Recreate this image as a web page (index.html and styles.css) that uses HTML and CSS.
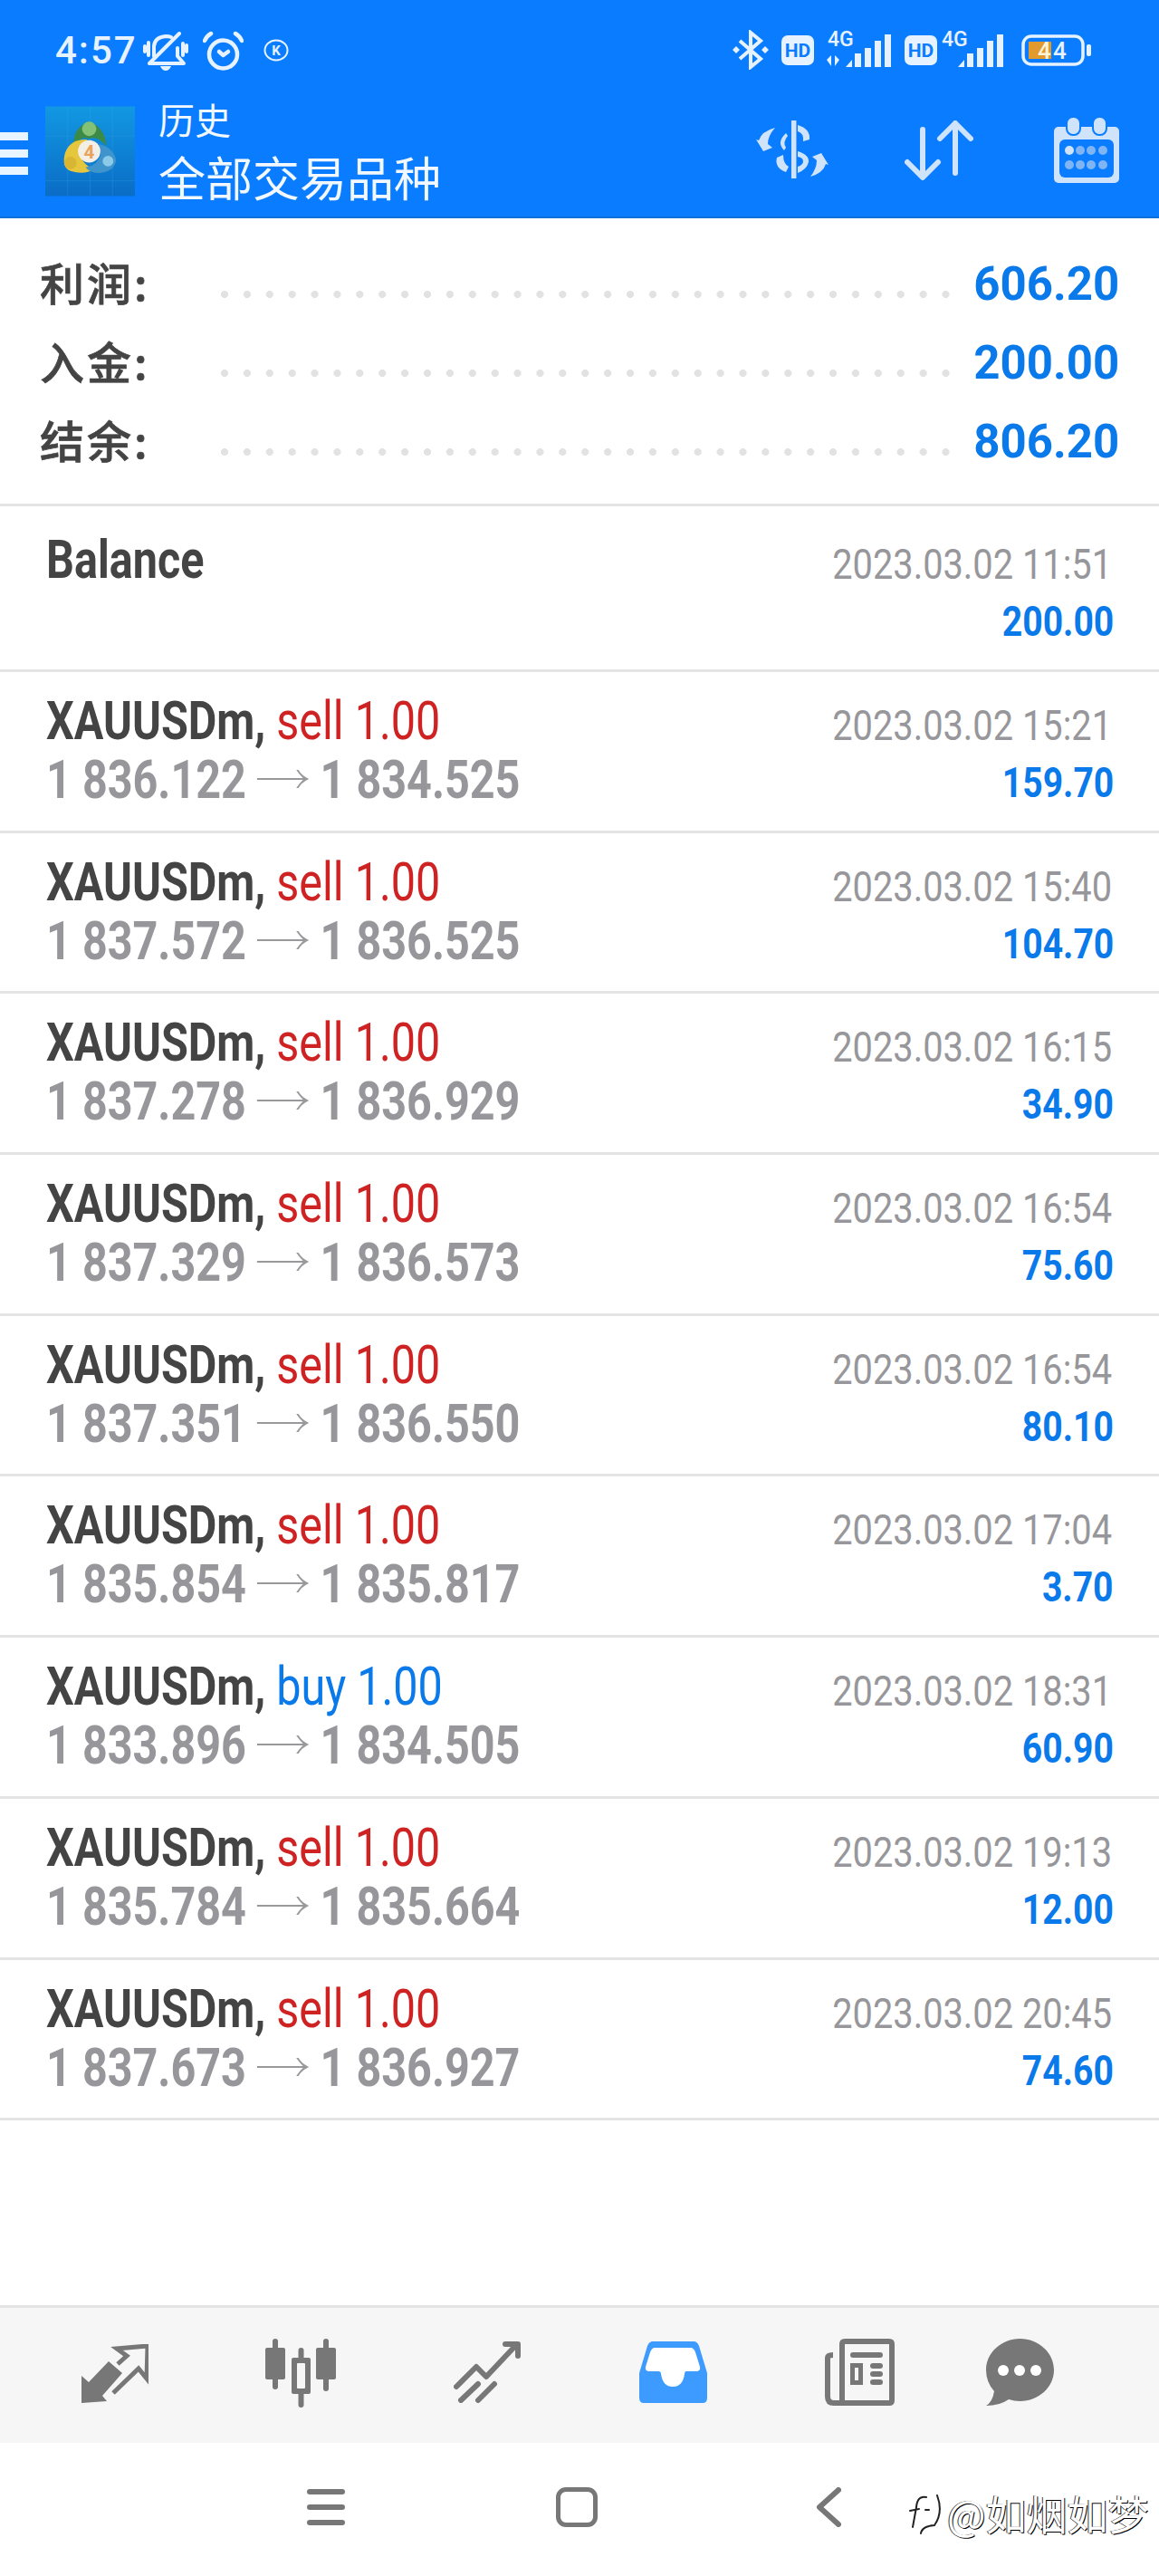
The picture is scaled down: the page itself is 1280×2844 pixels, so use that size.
FILE: index.html
```html
<!DOCTYPE html>
<html lang="zh-CN">
<head>
<meta charset="utf-8">
<title>历史</title>
<link rel="stylesheet" href="styles.css">
</head>
<body>
<svg class="defs" width="0" height="0" aria-hidden="true"><defs><symbol id="arr" viewBox="0 0 70 20"><path d="M0 9H62Q56 4 53 0H56Q60 6 70 10Q60 14 56 20H53Q56 16 62 11H0Z" fill="#99999c"/></symbol></defs></svg>
<div class="screen">
  <header class="header">
    <div class="status">
      <span class="time">4:57</span>
      <svg class="ic-bell" viewBox="0 0 50 44"><g fill="none" stroke="#e6f2ff" stroke-width="4" stroke-linecap="round" stroke-linejoin="round"><path d="M12 27V16Q13 6 25 5Q29 5 31 6"/><path d="M9 35H45L38 27V18"/><path d="M7 35L40 2"/><path d="M2 16V22M6 12V26M44 13V26M48 15V22"/></g><path d="M19 38H31Q29 43 25 43Q21 43 19 38Z" fill="#e6f2ff"/></svg>
      <svg class="ic-alarm" viewBox="0 0 45 44"><g fill="none" stroke="#e6f2ff" stroke-width="4.500" stroke-linecap="round" stroke-linejoin="round"><circle cx="22.500" cy="26" r="15.500"/><path d="M2 11Q4 6 9 3M36 3Q41 6 43 11"/><path d="M18 23L22.500 27L28 23"/></g></svg>
      <svg class="ic-k" viewBox="0 0 28 25"><ellipse cx="14" cy="12.500" rx="12.500" ry="11" fill="none" stroke="#e6f2ff" stroke-width="2"/><text x="14" y="18" class="ic-k-text" text-anchor="middle">K</text></svg>
      <div class="status-right">
        <svg class="ic-bt" viewBox="0 0 40 44"><path d="M8 12L31 32L20 41V3L31 12L8 32" fill="none" stroke="#e6f2ff" stroke-width="4"/><path d="M0 22L4 18L8 22L4 26ZM32 22L36 18L40 22L36 26Z" fill="#e6f2ff"/></svg>
        <svg class="ic-hd" viewBox="0 0 36 33"><rect width="36" height="33" rx="7" fill="#e6f2ff"/><text x="18" y="23.500" class="hd-text" text-anchor="middle">HD</text></svg>
        <svg class="ic-sig1" viewBox="0 -4 76 44"><text x="3" y="16" class="g-text">4G</text><path d="M2 31L7 26V38ZM16 31L11 26V38Z" fill="#e6f2ff"/><path d="M23 39L30 31V39Z" fill="#e6f2ff"/><rect x="33" y="24" width="7" height="15" fill="#e6f2ff"/><rect x="44" y="18" width="7" height="21" fill="#e6f2ff"/><rect x="55" y="10" width="7" height="29" fill="#e6f2ff"/><rect x="66" y="3" width="7" height="36" fill="#e6f2ff"/></svg>
        <svg class="ic-hd ic-hd2" viewBox="0 0 36 33"><rect width="36" height="33" rx="7" fill="#e6f2ff"/><text x="18" y="23.500" class="hd-text" text-anchor="middle">HD</text></svg>
        <svg class="ic-sig2" viewBox="0 -4 70 44"><text x="0" y="16" class="g-text">4G</text><path d="M18 39L25 31V39Z" fill="#e6f2ff"/><rect x="28" y="24" width="7" height="15" fill="#e6f2ff"/><rect x="39" y="18" width="7" height="21" fill="#e6f2ff"/><rect x="50" y="10" width="7" height="29" fill="#e6f2ff"/><rect x="61" y="3" width="7" height="36" fill="#e6f2ff"/></svg>
        <svg class="ic-batt" viewBox="0 0 78 35"><rect x="2" y="2" width="66" height="31" rx="9" fill="none" stroke="#e6f2ff" stroke-width="3.500"/><rect x="8" y="8" width="25" height="19" fill="#e29a2d"/><text x="18" y="27" class="batt-text batt-a">4</text><text x="35" y="27" class="batt-text">4</text><rect x="72" y="11" width="5" height="13" rx="2" fill="#e6f2ff"/></svg>
      </div>
    </div>
    <div class="toolbar">
      <div class="burger"><i></i><i></i><i></i></div>
      <svg class="logo" viewBox="0 0 100 100">
        <defs><linearGradient id="lg" x1="0" y1="0" x2="0" y2="1"><stop offset="0" stop-color="#1298e2"/><stop offset="1" stop-color="#0a6cc6"/></linearGradient></defs>
        <rect width="100" height="100" fill="url(#lg)"/>
        <path d="M25 0V100M50 0V100M75 0V100M0 33H100M0 83H100" stroke="#45a8e6" stroke-width=".5" stroke-opacity=".5" fill="none"/>
        <path d="M32 44Q30 24 49 17Q67 24 68 44Q58 32 49 36Q40 32 32 44Z" fill="#3c8a48"/>
        <circle cx="49" cy="25" r="8" fill="#83c276"/>
        <path d="M47 37Q28 36 22 52Q18 68 28 72Q44 77 54 70Q40 64 38 50Q42 42 47 37Z" fill="#e6c63c"/>
        <circle cx="28" cy="63" r="7" fill="#d9b534"/>
        <path d="M60 42Q76 46 79 60Q77 72 62 74Q50 75 45 68Q58 66 62 54Z" fill="#3f95cb"/>
        <circle cx="70" cy="61" r="6" fill="#8ccaea"/>
        <circle cx="49" cy="50" r="12.500" fill="#f3efe6"/>
        <text x="49" y="58" class="logo-four" text-anchor="middle">4</text>
      </svg>
      <div class="titles">
        <div class="t-small">历史</div>
        <div class="t-big">全部交易品种</div>
      </div>
      <svg class="tb-dollar" viewBox="0 0 80 64"><path d="M41.700 1V63" fill="none" stroke="#cfe3fb" stroke-width="5.500" stroke-linecap="round"/><g fill="#cfe3fb"><path d="M33 14Q22 24 31 33L33 30Q29 24 35 17Z"/><path d="M46 5Q60 9 59 21L52 23Q53 14 46 12Z"/><path d="M23 41L30 38Q30 48 36 51L33 57Q20 52 23 41Z"/><path d="M46 34Q59 38 58 46Q56 54 46 58V51Q52 49 52 45Q52 41 46 40Z"/><path d="M21 8Q6 12 3 22L0 21L8 34L18 30L13 26Q13 17 21 8Z"/><path d="M60 62Q74 58 77 48L80 49L72 36L62 40L67 44Q67 53 60 62Z"/></g></svg>
      <svg class="tb-arrows" viewBox="0 0 76 66"><g fill="none" stroke="#cfe3fb" stroke-width="6" stroke-linecap="round" stroke-linejoin="round"><path d="M20 10V62M3 46L20 63L37 46"/><path d="M56 3V58M39 20L56 3L73 20"/></g></svg>
      <svg class="tb-cal" viewBox="0 0 72 74"><rect y="12" width="72" height="62" rx="5" fill="#cfe3fb"/><rect x="6" y="26" width="60" height="42" rx="6" fill="#0a7cff"/><rect x="14" y="1" width="15" height="20" rx="7" fill="#cfe3fb" stroke="#0a7cff" stroke-width="2"/><rect x="43" y="1" width="15" height="20" rx="7" fill="#cfe3fb" stroke="#0a7cff" stroke-width="2"/><circle cx="17" cy="38" r="5" fill="#cfe3fb"/><g fill="#7fb5f5"><circle cx="29" cy="38" r="5"/><circle cx="41" cy="38" r="5"/><circle cx="54" cy="38" r="5"/><circle cx="17" cy="54" r="5"/><circle cx="29" cy="54" r="5"/><circle cx="41" cy="54" r="5"/><circle cx="54" cy="54" r="5"/></g></svg>
    </div>
  </header>

  <section class="summary">
    <div class="sum-row"><span class="sum-label">利润:</span><i class="dots"></i><span class="sum-val"><span class="sq-r sq-sum">606.20</span></span></div>
    <div class="sum-row"><span class="sum-label">入金:</span><i class="dots"></i><span class="sum-val"><span class="sq-r sq-sum">200.00</span></span></div>
    <div class="sum-row"><span class="sum-label">结余:</span><i class="dots"></i><span class="sum-val"><span class="sq-r sq-sum">806.20</span></span></div>
  </section>

  <section class="deals">
    <article class="deal deal-balance">
      <div class="deal-l"><div class="line"><span class="sq"><b class="sym">Balance</b></span></div></div>
      <div class="deal-r"><div class="line"><span class="sq-r date">2023.03.02 11:51</span></div><div class="line"><span class="sq-r val">200.00</span></div></div>
    </article>
    <article class="deal">
      <div class="deal-l"><div class="line"><span class="sq"><b class="sym">XAUUSDm,</b> <span class="sell">sell 1.00</span></span></div><div class="line"><span class="sq price">1 836.122 <svg class="arrow"><use href="#arr"/></svg> 1 834.525</span></div></div>
      <div class="deal-r"><div class="line"><span class="sq-r date">2023.03.02 15:21</span></div><div class="line"><span class="sq-r val">159.70</span></div></div>
    </article>
    <article class="deal">
      <div class="deal-l"><div class="line"><span class="sq"><b class="sym">XAUUSDm,</b> <span class="sell">sell 1.00</span></span></div><div class="line"><span class="sq price">1 837.572 <svg class="arrow"><use href="#arr"/></svg> 1 836.525</span></div></div>
      <div class="deal-r"><div class="line"><span class="sq-r date">2023.03.02 15:40</span></div><div class="line"><span class="sq-r val">104.70</span></div></div>
    </article>
    <article class="deal">
      <div class="deal-l"><div class="line"><span class="sq"><b class="sym">XAUUSDm,</b> <span class="sell">sell 1.00</span></span></div><div class="line"><span class="sq price">1 837.278 <svg class="arrow"><use href="#arr"/></svg> 1 836.929</span></div></div>
      <div class="deal-r"><div class="line"><span class="sq-r date">2023.03.02 16:15</span></div><div class="line"><span class="sq-r val">34.90</span></div></div>
    </article>
    <article class="deal">
      <div class="deal-l"><div class="line"><span class="sq"><b class="sym">XAUUSDm,</b> <span class="sell">sell 1.00</span></span></div><div class="line"><span class="sq price">1 837.329 <svg class="arrow"><use href="#arr"/></svg> 1 836.573</span></div></div>
      <div class="deal-r"><div class="line"><span class="sq-r date">2023.03.02 16:54</span></div><div class="line"><span class="sq-r val">75.60</span></div></div>
    </article>
    <article class="deal">
      <div class="deal-l"><div class="line"><span class="sq"><b class="sym">XAUUSDm,</b> <span class="sell">sell 1.00</span></span></div><div class="line"><span class="sq price">1 837.351 <svg class="arrow"><use href="#arr"/></svg> 1 836.550</span></div></div>
      <div class="deal-r"><div class="line"><span class="sq-r date">2023.03.02 16:54</span></div><div class="line"><span class="sq-r val">80.10</span></div></div>
    </article>
    <article class="deal">
      <div class="deal-l"><div class="line"><span class="sq"><b class="sym">XAUUSDm,</b> <span class="sell">sell 1.00</span></span></div><div class="line"><span class="sq price">1 835.854 <svg class="arrow"><use href="#arr"/></svg> 1 835.817</span></div></div>
      <div class="deal-r"><div class="line"><span class="sq-r date">2023.03.02 17:04</span></div><div class="line"><span class="sq-r val">3.70</span></div></div>
    </article>
    <article class="deal">
      <div class="deal-l"><div class="line"><span class="sq"><b class="sym">XAUUSDm,</b> <span class="buy">buy 1.00</span></span></div><div class="line"><span class="sq price">1 833.896 <svg class="arrow"><use href="#arr"/></svg> 1 834.505</span></div></div>
      <div class="deal-r"><div class="line"><span class="sq-r date">2023.03.02 18:31</span></div><div class="line"><span class="sq-r val">60.90</span></div></div>
    </article>
    <article class="deal">
      <div class="deal-l"><div class="line"><span class="sq"><b class="sym">XAUUSDm,</b> <span class="sell">sell 1.00</span></span></div><div class="line"><span class="sq price">1 835.784 <svg class="arrow"><use href="#arr"/></svg> 1 835.664</span></div></div>
      <div class="deal-r"><div class="line"><span class="sq-r date">2023.03.02 19:13</span></div><div class="line"><span class="sq-r val">12.00</span></div></div>
    </article>
    <article class="deal">
      <div class="deal-l"><div class="line"><span class="sq"><b class="sym">XAUUSDm,</b> <span class="sell">sell 1.00</span></span></div><div class="line"><span class="sq price">1 837.673 <svg class="arrow"><use href="#arr"/></svg> 1 836.927</span></div></div>
      <div class="deal-r"><div class="line"><span class="sq-r date">2023.03.02 20:45</span></div><div class="line"><span class="sq-r val">74.60</span></div></div>
    </article>
  </section>

  <div class="spacer"></div>

  <nav class="tabs">
    <svg class="tab tab-trade" viewBox="0 0 74 65"><path d="M0 35V65L28 63L23 57L45 32L30 19L8 42Z" fill="#777"/><path d="M40 22L50 13L39 5L73 2L72 38L63 27L35 54" fill="none" stroke="#777" stroke-width="5"/></svg>
    <svg class="tab tab-chart" viewBox="0 0 78 76"><g fill="none" stroke="#777" stroke-width="6" stroke-linecap="round"><path d="M11 3V53M67 3V55M39.500 13V73"/></g><rect y="10" width="22" height="35" rx="2" fill="#777"/><rect x="56" y="10" width="22" height="35" rx="2" fill="#777"/><rect x="29" y="21" width="21" height="40" rx="2" fill="#777"/><rect x="35" y="27" width="9" height="28" rx="1" fill="#f6f6f6"/></svg>
    <svg class="tab tab-stat" viewBox="0 0 74 69"><g fill="none" stroke="#777" stroke-width="6" stroke-linecap="round" stroke-linejoin="round"><path d="M3 51L25 29L36 40L69 5"/><path d="M57 4H71V17"/><path d="M8 66L27 48M27 66L45 48"/></g></svg>
    <svg class="tab tab-inbox" viewBox="0 0 75 68"><path d="M15 0H60Q64 0 66 5L75 35V62Q75 68 70 68H5Q0 68 0 62V35L9 5Q11 0 15 0Z" fill="#3d9bff"/><path d="M17 7H57Q60 7 62 12L67 28Q68 33 63 33H52Q50 33 50 36Q48 50 37 50Q26 50 24 36Q24 33 21 33H11Q6 33 7 28L12 12Q14 7 17 7Z" fill="#fff"/></svg>
    <svg class="tab tab-news" viewBox="0 0 77 74"><path d="M19 70V6Q19 3 22 3H71Q74 3 74 6V68Q74 71 71 71H10Q3 71 3 64V21Q3 18 9 18" fill="none" stroke="#777" stroke-width="6"/><g fill="#777"><rect x="28" y="15" width="36" height="6" rx="3"/><path d="M28 27H42V51H28ZM33 32V46H37V32Z" fill-rule="evenodd"/><rect x="50" y="27" width="14" height="6" rx="3"/><rect x="50" y="36" width="14" height="6" rx="3"/><rect x="50" y="45" width="14" height="6" rx="3"/></g></svg>
    <svg class="tab tab-chat" viewBox="0 0 75 74"><path d="M37.500 0C58 0 75 15.500 75 34.500S58 69 37.500 69Q31 69 25 67Q15 74 0 74Q7 70 9 58Q0 48 0 34.500C0 15.500 17 0 37.500 0Z" fill="#777"/><circle cx="19" cy="35" r="6" fill="#fff"/><circle cx="37" cy="35" r="6" fill="#fff"/><circle cx="55" cy="35" r="6" fill="#fff"/></svg>
  </nav>

  <div class="sysbar">
    <div class="sys-menu"><i></i><i></i><i></i></div>
    <div class="sys-home"></div>
    <svg class="sys-back" viewBox="0 0 28 44"><path d="M25 3L4 22L25 41" fill="none" stroke="#777" stroke-width="6" stroke-linecap="round" stroke-linejoin="round"/></svg>
    <div class="watermark">
      <svg class="wm-logo" viewBox="0 0 40 46"><g fill="none" stroke="#222" stroke-width="2" stroke-linecap="round"><path d="M22 5Q12 3 11 16L7 38M4 20L14 18M21 19H25"/><path d="M34 3Q41 22 31 36Q17 37 16 45"/></g></svg>
      <span class="wm-text">@如烟如梦</span>
    </div>
  </div>
</div>
</body>
</html>
```
FILE: styles.css
```css
* { box-sizing: border-box; }
html, body { margin: 0; padding: 0; background: #fff; }
body { width: 1280px; height: 2844px; overflow: hidden; font-family: Roboto, "Noto Sans CJK SC", sans-serif; }
.defs { position: absolute; }
.screen { width: 1280px; height: 2844px; display: flex; flex-direction: column; position: relative; }
i { display: block; }

/* header */
.header { background: #0a7cff; height: 241px; border-bottom: 2px solid #0a6fd8; flex: none; }
.status { height: 112px; display: flex; align-items: flex-start; padding: 33px 74px 0 61px; color: #e6f2ff; }
.time { font: 500 42px/46px Roboto, sans-serif; letter-spacing: 2px; width: 86px; white-space: nowrap; flex: none; }
.ic-bell { width: 50px; height: 44px; margin: 2px 0 0 11px; flex: none; }
.ic-alarm { width: 45px; height: 44px; margin: 1px 0 0 16px; flex: none; }
.ic-k { width: 28px; height: 25px; margin: 10px 0 0 22px; flex: none; }
.ic-k-text { font: 700 15px Roboto, sans-serif; fill: #e6f2ff; }
.status-right { margin-left: auto; display: flex; align-items: flex-start; }
.ic-bt { width: 40px; height: 44px; }
.ic-hd { width: 36px; height: 33px; margin: 6px 0 0 14px; }
.ic-hd2 { margin-left: 12px; }
.hd-text { font: 700 21px Roboto, sans-serif; fill: #0a7cff; }
.g-text { font: 500 23px Roboto, sans-serif; fill: #e6f2ff; }
.ic-sig1 { width: 76px; height: 44px; margin: -2px 0 0 12px; }
.ic-sig2 { width: 70px; height: 44px; margin: -2px 0 0 5px; }
.ic-batt { width: 78px; height: 35px; margin: 5px 0 0 18px; }
.batt-text { font: 500 26px Roboto, sans-serif; fill: #e6f2ff; }
.batt-a { fill: #fff4d8; }

.toolbar { height: 127px; display: flex; align-items: flex-start; padding: 5px 44px 0 0; color: #fff; }
.burger { width: 31px; margin-top: 29px; display: flex; flex-direction: column; gap: 10px; flex: none; }
.burger i { height: 9px; background: #e8f4ff; }
.logo { width: 99px; height: 100px; margin-left: 19px; flex: none; }
.titles { margin: -10px 0 0 26px; font-family: "Noto Sans CJK SC", sans-serif; color: #f2f8ff; }
.t-small { font-size: 40px; line-height: 48px; }
.t-big { font-size: 52px; line-height: 56px; margin-top: 12px; white-space: nowrap; }
.tb-dollar { width: 80px; height: 64px; margin: 16px 0 0 auto; flex: none; }
.tb-arrows { width: 76px; height: 66px; margin: 16px 0 0 84px; flex: none; }
.tb-cal { width: 72px; height: 74px; margin: 11px 0 0 89px; flex: none; }

/* summary */
.summary { height: 315px; padding-top: 29px; flex: none; }
.sum-row { height: 87px; display: flex; align-items: center; padding-right: 44px; }
.sum-label { width: 244px; padding-left: 44px; margin-top: -6px; flex: none; font: 500 49px/60px "Noto Sans CJK SC", sans-serif; color: #444; letter-spacing: 3px; white-space: nowrap; -webkit-text-stroke: .7px #444; }
.dots { width: 808px; height: 8px; margin-top: 22px; flex: none; background: radial-gradient(circle at 4px 4px, #e2e2e2 3.800px, transparent 4.300px) 0 0 / 24.900px 8px repeat-x; }
.sum-val { margin-left: auto; font: 700 52px/60px Roboto, sans-serif; color: #0a79ea; white-space: nowrap; }

/* squeezed text */
.sq, .sq-r { display: inline-block; white-space: nowrap; }
.sq { transform: scaleX(.822); transform-origin: left center; }
.sq-r { transform: scaleX(.85); transform-origin: right center; }
.sq-r.sq-sum { transform: scaleX(.98); }
.sq-r.date { transform: scaleX(.865); }

/* deals */
.deals { flex: none; border-top: 3px solid #e4e4e4; }
.deal { height: 177.700px; border-bottom: 3px solid #e4e4e4; display: flex; justify-content: space-between; padding: 22px 50px 0 51px; }
.deal-balance { height: 183px; padding-top: 27px; }
.line { height: 63px; line-height: 63px; white-space: nowrap; }
.deal-l { font-size: 59px; color: #444; }
.deal-l .line + .line { margin-top: 2px; }
.deal-r { text-align: right; padding-top: 6px; }
.sym { font-weight: 700; }
.sell { color: #cf2222; font-weight: 400; }
.buy { color: #0a79ea; font-weight: 400; }
.price { color: #97979b; font-weight: 700; }
.arrow { width: 70px; height: 20px; vertical-align: 11px; }
.date { font-size: 46px; font-weight: 400; color: #97979b; margin-right: 2px; }
.val { font-size: 46px; font-weight: 700; color: #0a79ea; }

.spacer { flex: 1; }

/* tabs */
.tabs { height: 152px; flex: none; background: #f6f6f6; border-top: 3px solid #e4e4e4; display: flex; align-items: flex-start; padding-left: 90px; }
.tab { flex: none; }
.tab-trade { width: 74px; height: 65px; margin-top: 40px; }
.tab-chart { width: 78px; height: 76px; margin: 34px 0 0 129px; }
.tab-stat { width: 74px; height: 69px; margin: 36px 0 0 130px; }
.tab-inbox { width: 75px; height: 68px; margin: 37px 0 0 131px; }
.tab-news { width: 77px; height: 74px; margin: 34px 0 0 130px; }
.tab-chat { width: 75px; height: 74px; margin: 34px 0 0 101px; }

/* system bar */
.sysbar { height: 147px; flex: none; position: relative; display: flex; align-items: flex-start; padding: 49px 0 0 339px; }
.sys-menu { width: 42px; height: 40px; margin-top: 2px; display: flex; flex-direction: column; justify-content: space-between; flex: none; }
.sys-menu i { height: 6px; border-radius: 3px; background: #777; }
.sys-home { width: 46px; height: 44px; margin-left: 233px; border: 5px solid #777; border-radius: 11px; flex: none; }
.sys-back { width: 28px; height: 44px; margin-left: 241px; flex: none; }
.watermark { position: absolute; left: 1001px; top: 52px; display: flex; align-items: center; gap: 5px; }
.wm-logo { width: 40px; height: 46px; flex: none; }
.wm-text { font: 400 45px/52px "Noto Sans CJK SC", sans-serif; color: #fff; text-shadow: 1px 1px 0 #000, -1px 0 0 #333; white-space: nowrap; }

.logo-four { font: 700 21px Roboto, sans-serif; fill: #e8a45c; }
```
